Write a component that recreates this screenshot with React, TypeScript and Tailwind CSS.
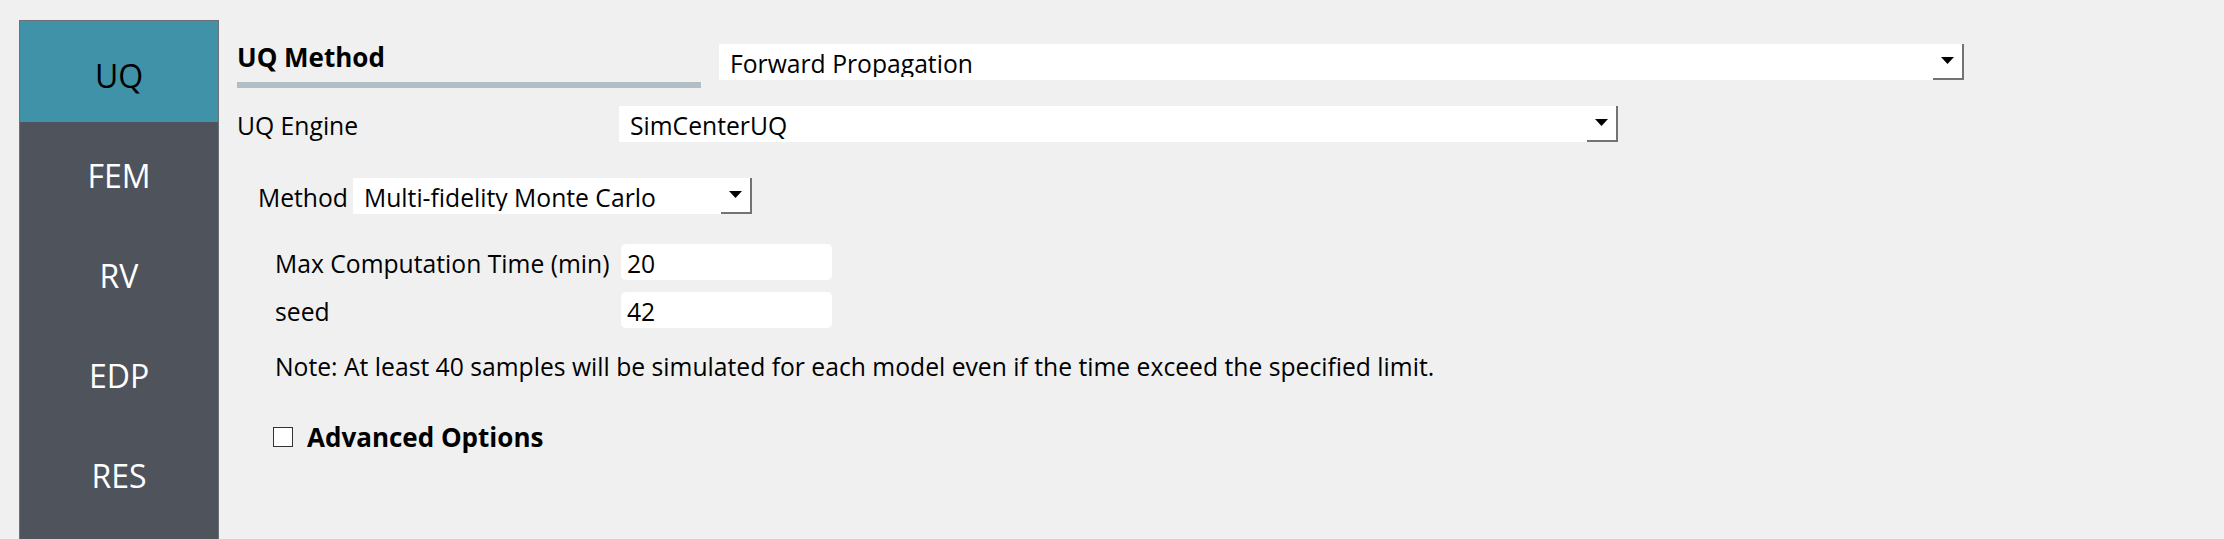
import React from "react";

const tabs = ["UQ", "FEM", "RV", "EDP", "RES"];

function Arrow() {
  return (
    <svg width="13" height="7" viewBox="0 0 13 7">
      <path d="M0 0 H13 L6.5 7 Z" fill="#000" />
    </svg>
  );
}

// combo box, Windows style: white field with a small arrow button on the right
function Combo({ value, width }: { value: string; width: string }) {
  return (
    <div className={`flex h-[36px] shrink-0 bg-white ${width}`}>
      <div className="min-w-0 flex-1 pl-[11px]">
        <div className="mt-[8px] h-[25px] overflow-hidden whitespace-nowrap leading-[24px]">{value}</div>
      </div>
      <div className="flex w-[31px] shrink-0 items-center justify-center border-r-2 border-b-2 border-[#737373] pb-[2px]">
        <Arrow />
      </div>
    </div>
  );
}

function Field({ value }: { value: string }) {
  return (
    <div className="h-[36px] w-[211px] shrink-0 rounded-[5px] bg-white pl-[6px] pt-[4px] leading-[32px]">
      {value}
    </div>
  );
}

export default function App() {
  return (
    <div className="flex h-[539px] w-[2224px] overflow-hidden bg-[#f0f0f0] font-['Open_Sans',sans-serif] text-[24.7px] text-black">
      {/* side nav */}
      <div className="ml-[19px] mt-[20px] flex h-[540px] w-[200px] shrink-0 flex-col border border-[#6c7077] bg-[#4f535b]">
        {tabs.map((t, i) => (
          <div
            key={t}
            className={
              i === 0
                ? "flex h-[101px] items-center justify-center bg-[#3f92a8] pt-[9px] text-[32px] leading-none text-black"
                : "flex h-[100px] items-center justify-center pt-[8px] text-[32px] leading-none text-white"
            }
          >
            {t}
          </div>
        ))}
      </div>

      {/* content */}
      <div className="ml-[18px] flex flex-col pt-[44px]">
        <div className="flex items-start">
          <div className="flex w-[464px] shrink-0 flex-col">
            <div className="h-[26px] text-[26px] font-bold leading-[26px]">UQ Method</div>
            <div className="mt-[12px] h-[6px] bg-[#b1bec5]" />
          </div>
          <div className="ml-[18px]">
            <Combo value="Forward Propagation" width="w-[1245px]" />
          </div>
        </div>

        <div className="mt-[18px] flex h-[36px]">
          <div className="w-[382px] shrink-0 pt-[4px] leading-[32px]">UQ Engine</div>
          <Combo value="SimCenterUQ" width="w-[999px]" />
        </div>

        <div className="mt-[36px] flex h-[36px] pl-[21px]">
          <div className="w-[95px] shrink-0 pt-[4px] leading-[32px]">Method</div>
          <Combo value="Multi-fidelity Monte Carlo" width="w-[399px]" />
        </div>

        <div className="mt-[30px] flex h-[36px] pl-[38px]">
          <div className="w-[346px] shrink-0 whitespace-nowrap pt-[4px] leading-[32px]">Max Computation Time (min)</div>
          <Field value="20" />
        </div>

        <div className="mt-[12px] flex h-[36px] pl-[38px]">
          <div className="w-[346px] shrink-0 pt-[4px] leading-[32px]">seed</div>
          <Field value="42" />
        </div>

        <div className="mt-[23px] whitespace-nowrap pl-[38px] leading-[32px]">
          Note: At least 40 samples will be simulated for each model even if the time exceed the specified limit.
        </div>

        <div className="mt-[39px] flex h-[30px] items-center pl-[36px]">
          <div className="h-[20px] w-[20px] border border-[#333333] bg-white" />
          <div className="ml-[14px] text-[26px] font-bold leading-[30px]">Advanced Options</div>
        </div>
      </div>
    </div>
  );
}
